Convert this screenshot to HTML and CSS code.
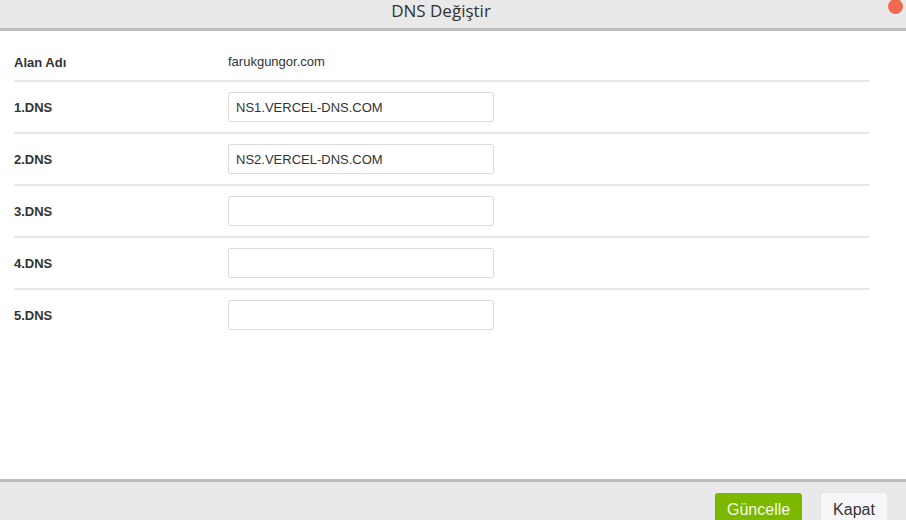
FILE: index.html
```html
<!DOCTYPE html>
<html lang="tr">
<head>
<meta charset="utf-8">
<title>DNS Değiştir</title>
<link rel="stylesheet" href="styles.css">
</head>
<body>
<div class="modal">
  <header class="modal-header">
    <h1 class="modal-title">DNS Değiştir</h1>
    <span class="close-dot"></span>
  </header>
  <main class="modal-body">
    <div class="row">
      <div class="label">Alan Adı</div>
      <div class="value">farukgungor.com</div>
    </div>
    <div class="row">
      <div class="label">1.DNS</div>
      <div class="value"><input class="field" type="text" value="NS1.VERCEL-DNS.COM"></div>
    </div>
    <div class="row">
      <div class="label">2.DNS</div>
      <div class="value"><input class="field" type="text" value="NS2.VERCEL-DNS.COM"></div>
    </div>
    <div class="row">
      <div class="label">3.DNS</div>
      <div class="value"><input class="field" type="text" value=""></div>
    </div>
    <div class="row">
      <div class="label">4.DNS</div>
      <div class="value"><input class="field" type="text" value=""></div>
    </div>
    <div class="row last">
      <div class="label">5.DNS</div>
      <div class="value"><input class="field" type="text" value=""></div>
    </div>
  </main>
  <footer class="modal-footer">
    <button class="btn btn-primary" type="button">Güncelle</button>
    <button class="btn btn-default" type="button">Kapat</button>
  </footer>
</div>
</body>
</html>
```
FILE: styles.css
```css
html, body {
  margin: 0;
  padding: 0;
  background: #ffffff;
}
body {
  font-family: "Liberation Sans", Arial, sans-serif;
  color: #333333;
  overflow: hidden;
}
.modal {
  width: 906px;
  height: 520px;
  display: flex;
  flex-direction: column;
  overflow: hidden;
  position: relative;
}
.modal-header {
  height: 28px;
  background: #e9e9e9;
  border-bottom: 3px solid #bdbdbd;
  display: flex;
  justify-content: center;
  padding-right: 24px;
  flex-shrink: 0;
}
.modal-title {
  margin: 0;
  font-family: "Open Sans", sans-serif;
  font-weight: 400;
  font-size: 17px;
  line-height: 22px;
  color: #333333;
}
.close-dot {
  position: absolute;
  top: -1px;
  left: 888px;
  width: 15px;
  height: 15px;
  border-radius: 50%;
  background: #f26a4f;
}
.modal-body {
  flex: 1;
  padding: 13px 37px 0 14px;
}
.row {
  display: flex;
  align-items: center;
  min-height: 30px;
  padding: 10px 0;
  border-bottom: 2px solid #e6e6e6;
}
.row:first-child {
  min-height: 16px;
}
.row.last {
  border-bottom: none;
}
.label {
  width: 214px;
  font-size: 13px;
  font-weight: 700;
  color: #333333;
}
.value {
  font-size: 13px;
  color: #333333;
  line-height: 16px;
}
.field {
  box-sizing: border-box;
  width: 266px;
  height: 30px;
  border: 1px solid #dddddd;
  border-radius: 2px;
  padding: 0 7px;
  font-family: "Liberation Sans", Arial, sans-serif;
  font-size: 13px;
  color: #333333;
  background: #ffffff;
  outline: none;
}
.modal-footer {
  box-sizing: border-box;
  height: 41px;
  flex-shrink: 0;
  background: #e9e9e9;
  border-top: 3px solid #bdbdbd;
  display: flex;
  justify-content: flex-end;
  align-items: flex-start;
  gap: 19px;
  padding: 11px 19px 0 0;
}
.btn {
  font-family: "Liberation Sans", Arial, sans-serif;
  font-size: 16px;
  height: 34px;
  line-height: 30px;
  padding: 0 12px;
  border: none;
  border-radius: 3px;
  flex-shrink: 0;
}
.btn-primary {
  background: #7cb800;
  color: #f4fbe6;
  width: 87px;
}
.btn-default {
  background: #f6f6f8;
  color: #333333;
  width: 66px;
}
```
